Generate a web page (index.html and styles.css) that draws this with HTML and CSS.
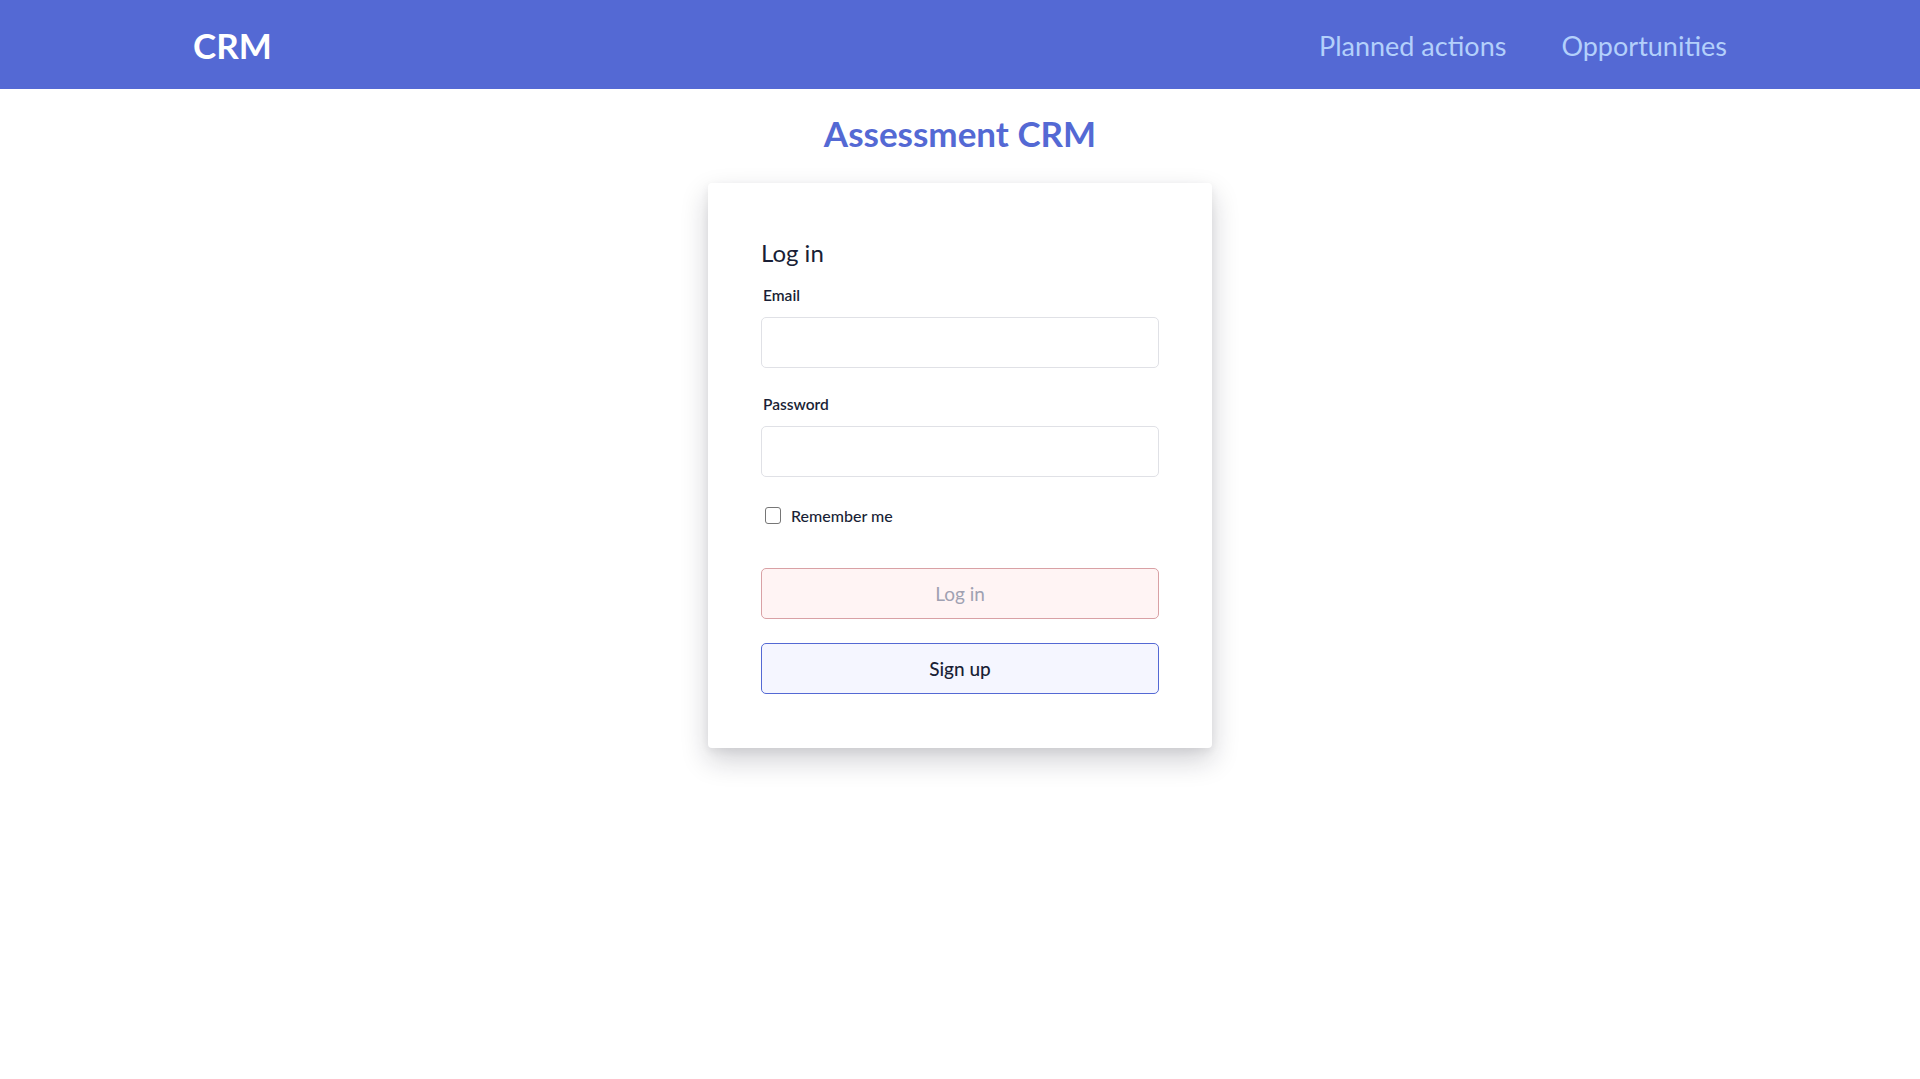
FILE: index.html
```html
<!DOCTYPE html>
<html lang="en">
<head>
<meta charset="utf-8">
<title>Assessment CRM</title>
<link rel="stylesheet" href="styles.css">
</head>
<body>
<header class="topbar">
  <a class="brand" href="#">CRM</a>
  <nav class="nav">
    <a class="nav-link" href="#">Planned actions</a>
    <a class="nav-link" href="#">Opportunities</a>
  </nav>
</header>
<main class="main">
  <h1 class="title">Assessment CRM</h1>
  <section class="card">
    <h2 class="card-title">Log in</h2>
    <form class="form">
      <div class="field">
        <label class="label" for="email">Email</label>
        <input class="input" id="email" type="email">
      </div>
      <div class="field">
        <label class="label" for="password">Password</label>
        <input class="input" id="password" type="password">
      </div>
      <label class="check">
        <span class="checkbox"></span>
        <span class="check-text">Remember me</span>
      </label>
      <button type="button" class="btn btn-login">Log in</button>
      <button type="button" class="btn btn-signup">Sign up</button>
    </form>
  </section>
</main>
</body>
</html>
```

FILE: styles.css
```css
* { box-sizing: border-box; }
html, body { margin: 0; padding: 0; }
body {
  font-family: Lato, "Open Sans", sans-serif;
  color: #1a1f36;
  background: #ffffff;
  min-height: 100vh;
}
.topbar {
  height: 89px;
  background: #5469d4;
  display: flex;
  align-items: center;
  justify-content: space-between;
  padding: 0 193px;
}
.brand {
  color: #ffffff;
  font-weight: 700;
  font-size: 35px;
  text-decoration: none;
}
.nav { display: flex; gap: 55px; padding-top: 2px; }
.nav-link {
  color: #b3d0fb;
  font-size: 27px;
  text-decoration: none;
}
.main {
  display: flex;
  flex-direction: column;
  align-items: center;
  padding-bottom: 80px;
}
.title {
  margin: 20px 0 26px;
  font-size: 35px;
  line-height: 48px;
  font-weight: 700;
  color: #5469d4;
}
.card {
  width: 504px;
  height: 565px;
  background: #ffffff;
  border-radius: 4px;
  padding: 55px 53px 52px;
  box-shadow: 0 12px 28px rgba(20, 20, 40, 0.2), 0 3px 8px rgba(0, 0, 0, 0.06);
}
.card-title {
  margin: 0 0 17px;
  font-size: 24px;
  line-height: 30px;
  font-weight: 400;
}
.form { display: flex; flex-direction: column; }
.field { display: flex; flex-direction: column; margin-bottom: 26px; }
.label {
  font-size: 15.5px;
  line-height: 20px;
  font-weight: 600;
  margin-bottom: 12px;
  padding-left: 2px;
}
.input {
  height: 51px;
  border: 1px solid #e0e1e6;
  border-radius: 5px;
  background: #fff;
  font: inherit;
}
.check {
  display: flex;
  align-items: center;
  gap: 10px;
  padding-left: 4px;
  margin-top: 3px;
  margin-bottom: 43px;
  font-size: 16px;
  font-weight: 500;
}
.checkbox {
  width: 16px;
  height: 17px;
  border: 1px solid #767676;
  border-radius: 3px;
  background: #fff;
}
.btn {
  height: 51px;
  border-radius: 5px;
  font-family: inherit;
  font-size: 19px;
  cursor: pointer;
}
.btn-login {
  background: #fff4f4;
  border: 1px solid #d9a1a5;
  color: #a0a1b2;
  margin-bottom: 24px;
}
.btn-signup {
  background: #f5f6ff;
  border: 1px solid #5469d4;
  color: #1a1f36;
  font-weight: 500;
}
```
